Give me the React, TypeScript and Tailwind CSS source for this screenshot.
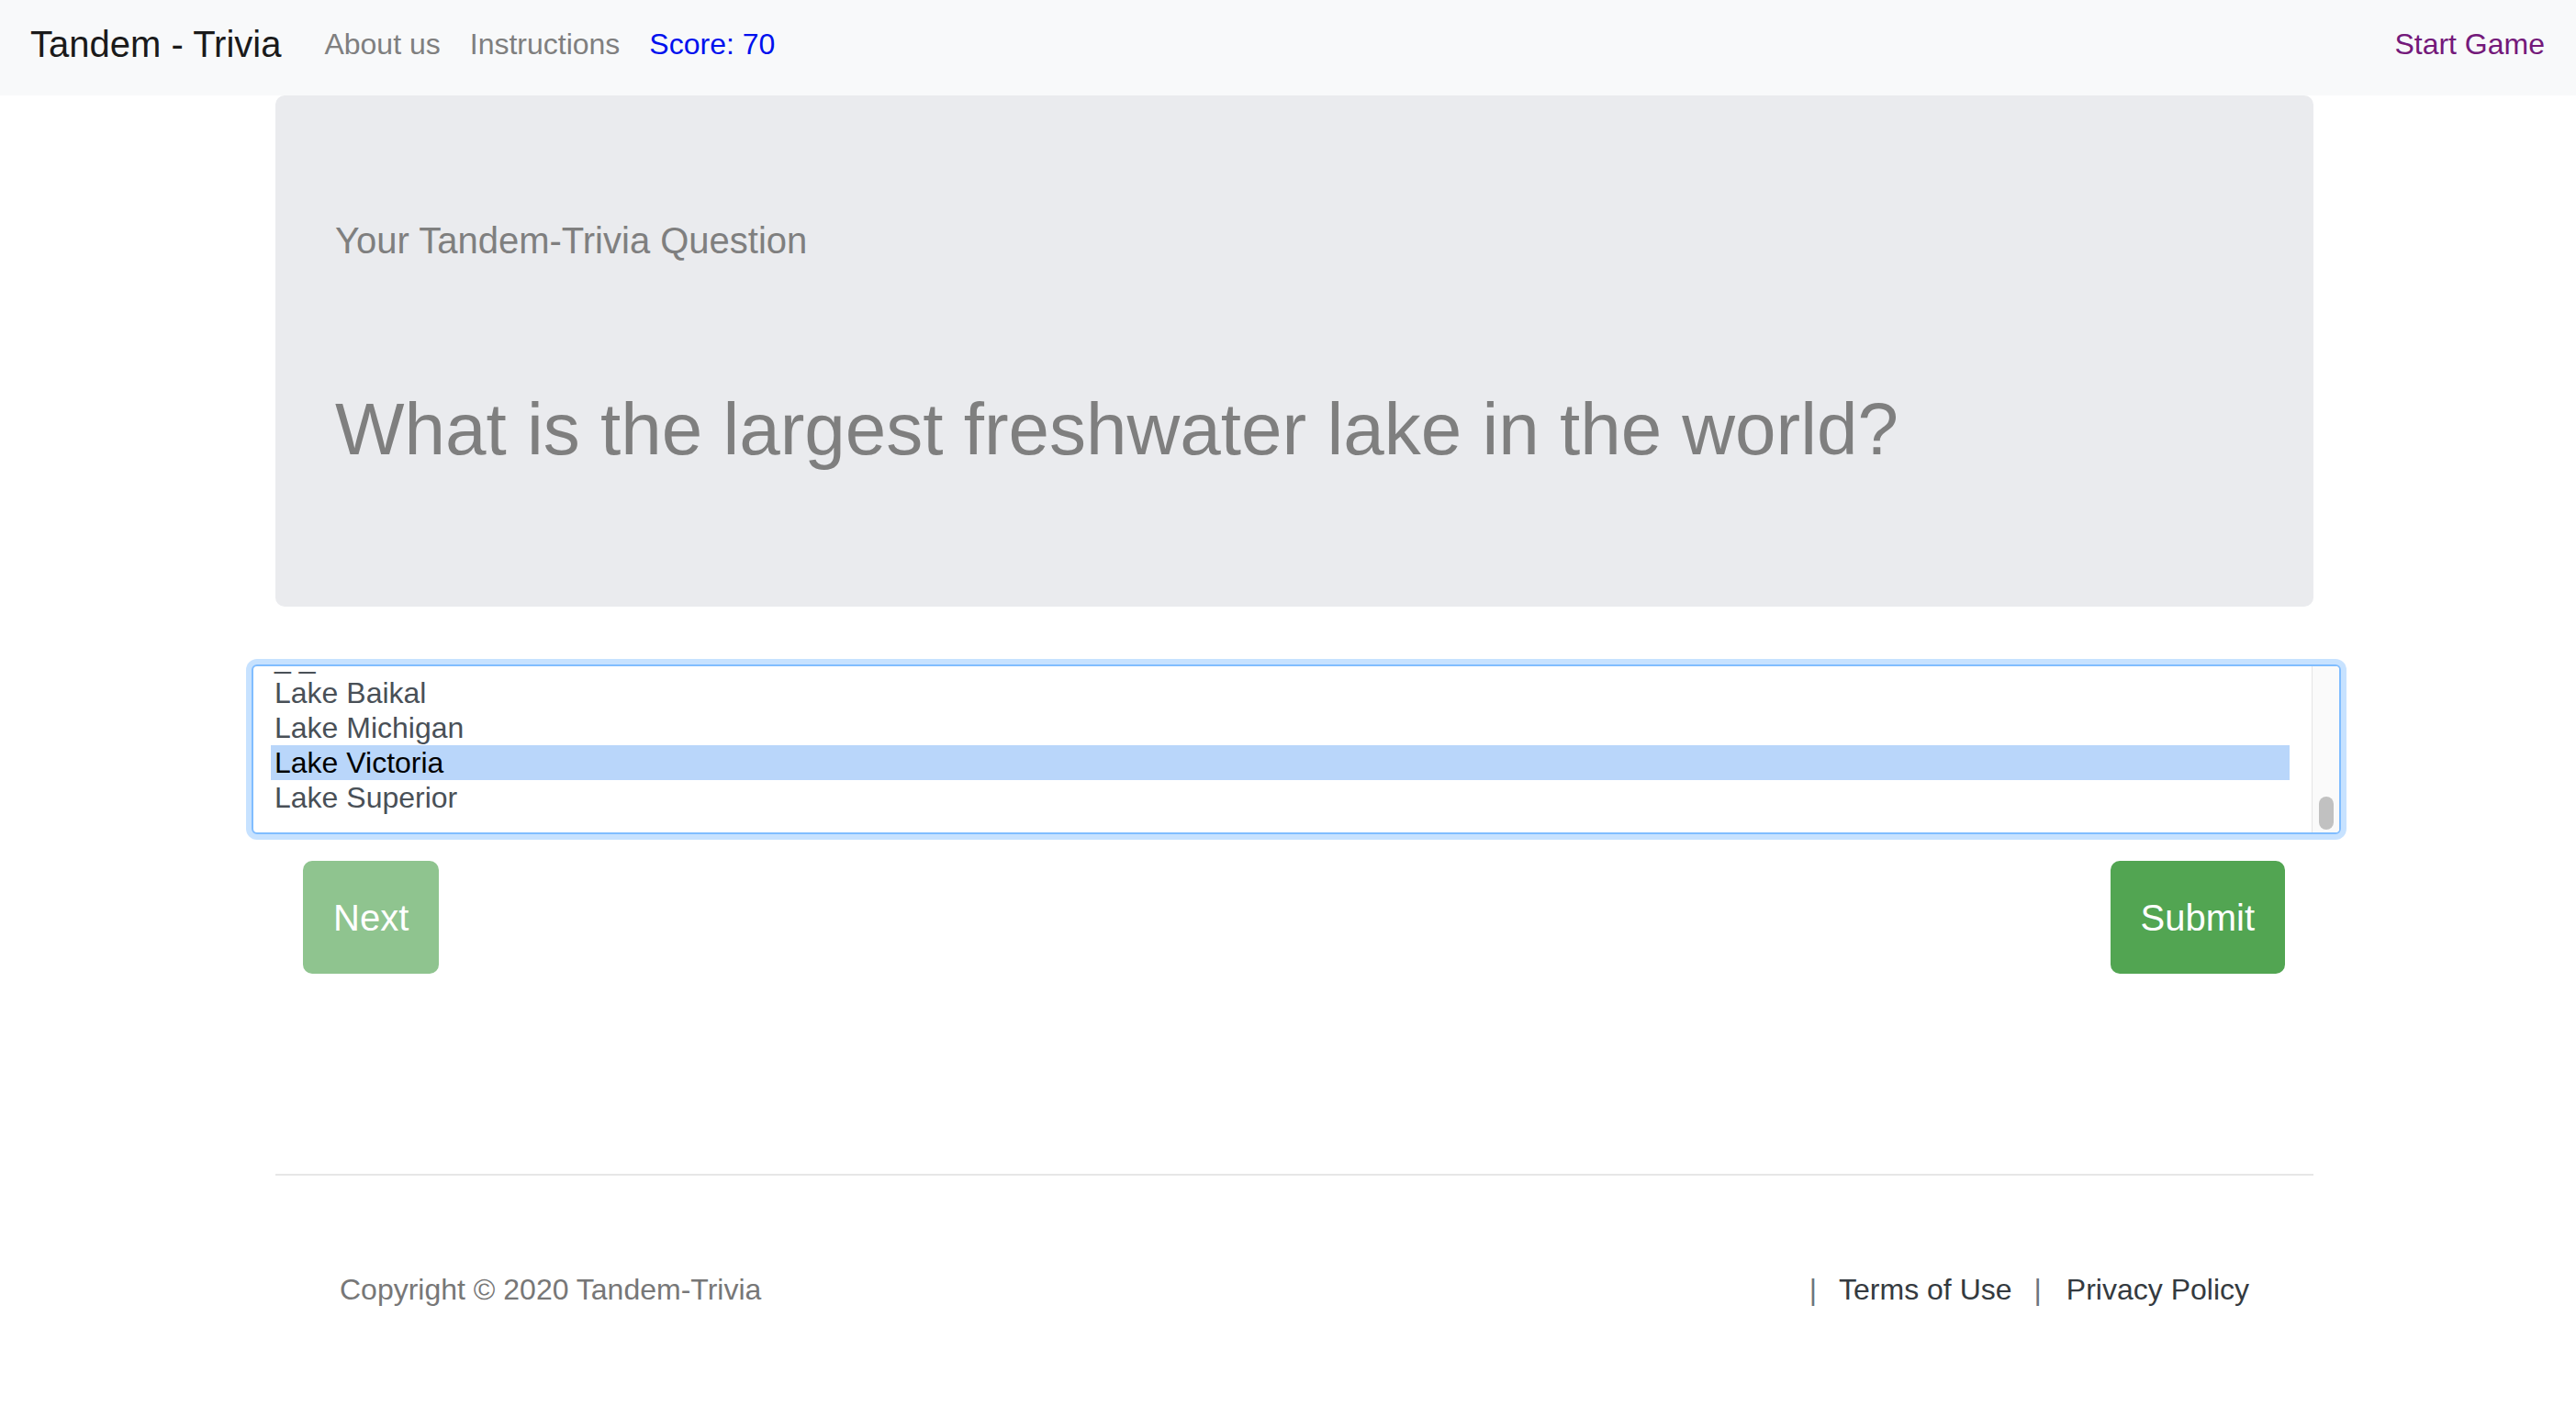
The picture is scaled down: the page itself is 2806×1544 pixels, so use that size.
import React from 'react';

const answers = ['Lake Baikal', 'Lake Michigan', 'Lake Victoria', 'Lake Superior'];

export default function App() {
  const selected = 'Lake Victoria';

  return (
    <div className="min-h-screen w-full bg-white font-['Liberation_Sans',Arial,Helvetica,sans-serif]">
      {/* 상단 네비게이션 */}
      <nav className="h-[104px] bg-[#f8f9fa] flex items-center pb-[9px] pl-[33px] pr-[34px]">
        <span className="text-[40px] leading-[60px] text-[#1a1a1a] mr-[47px]">Tandem - Trivia</span>
        <div className="flex items-center gap-[32px] text-[32px] leading-[48px]">
          <span className="text-[#7f7f7f]">About us</span>
          <span className="text-[#7f7f7f]">Instructions</span>
          <span className="text-[#0011ee]">Score: 70</span>
        </div>
        <span className="ml-auto text-[32px] leading-[48px] text-[#74197a]">Start Game</span>
      </nav>

      <main className="w-[2220px] ml-[300px]">
        {/* 질문 카드 */}
        <div className="bg-[#eaebee] rounded-[10px] pl-[65px] pr-[64px] pt-[134px] pb-[145px]">
          <p className="text-[40px] leading-[48px] text-[#7f7f7f]">Your Tandem-Trivia Question</p>
          <h1 className="mt-[134px] text-[80px] leading-[96px] text-[#7f7f7f]">
            What is the largest freshwater lake in the world?
          </h1>
        </div>

        {/* 답 선택 목록 */}
        <div className="mt-[63px] ml-[-26px] w-[2276px] h-[185px] border-2 border-[#80bdff] rounded-[6px] shadow-[0_0_0_6px_rgba(0,123,255,0.22)] flex overflow-hidden bg-white">
          <div className="flex-1 overflow-hidden pl-[19px] pr-[24px]">
            <div className="mt-[-28px] text-[32px] leading-[38px] text-[#495057]">
              <div className="h-[38px] pl-[4px]">_ _</div>
              {answers.map((a) => (
                <div
                  key={a}
                  className={
                    a === selected
                      ? 'h-[38px] pl-[4px] bg-[#b9d6fa] text-black'
                      : 'h-[38px] pl-[4px]'
                  }
                >
                  {a}
                </div>
              ))}
            </div>
          </div>
          <div className="w-[30px] bg-[#fafafa] border-l border-[#e5e5e5] flex flex-col justify-end items-center pb-[3px]">
            <div className="w-[16px] h-[36px] rounded-full bg-[#c1c1c1]"></div>
          </div>
        </div>

        {/* 버튼 */}
        <div className="mt-[29px] flex justify-between pl-[30px] pr-[31px]">
          <button className="h-[123px] px-[33px] rounded-[10px] bg-[#8fc48f] text-white text-[40px] leading-[48px]">
            Next
          </button>
          <button className="h-[123px] px-[33px] rounded-[10px] bg-[#52a552] text-white text-[40px] leading-[48px]">
            Submit
          </button>
        </div>

        <hr className="mt-[218px] border-0 h-[2px] bg-[#e6e6e6]" />

        {/* 푸터 */}
        <footer className="mt-[100px] flex justify-between px-[70px] text-[32px] leading-[48px]">
          <span className="text-[#777777]">Copyright © 2020 Tandem-Trivia</span>
          <div className="flex items-center text-[#343a40]">
            <span className="text-[#6c757d] mr-[24px]">|</span>
            <span>Terms of Use</span>
            <span className="text-[#6c757d] ml-[24px] mr-[27px]">|</span>
            <span>Privacy Policy</span>
          </div>
        </footer>
      </main>
    </div>
  );
}
